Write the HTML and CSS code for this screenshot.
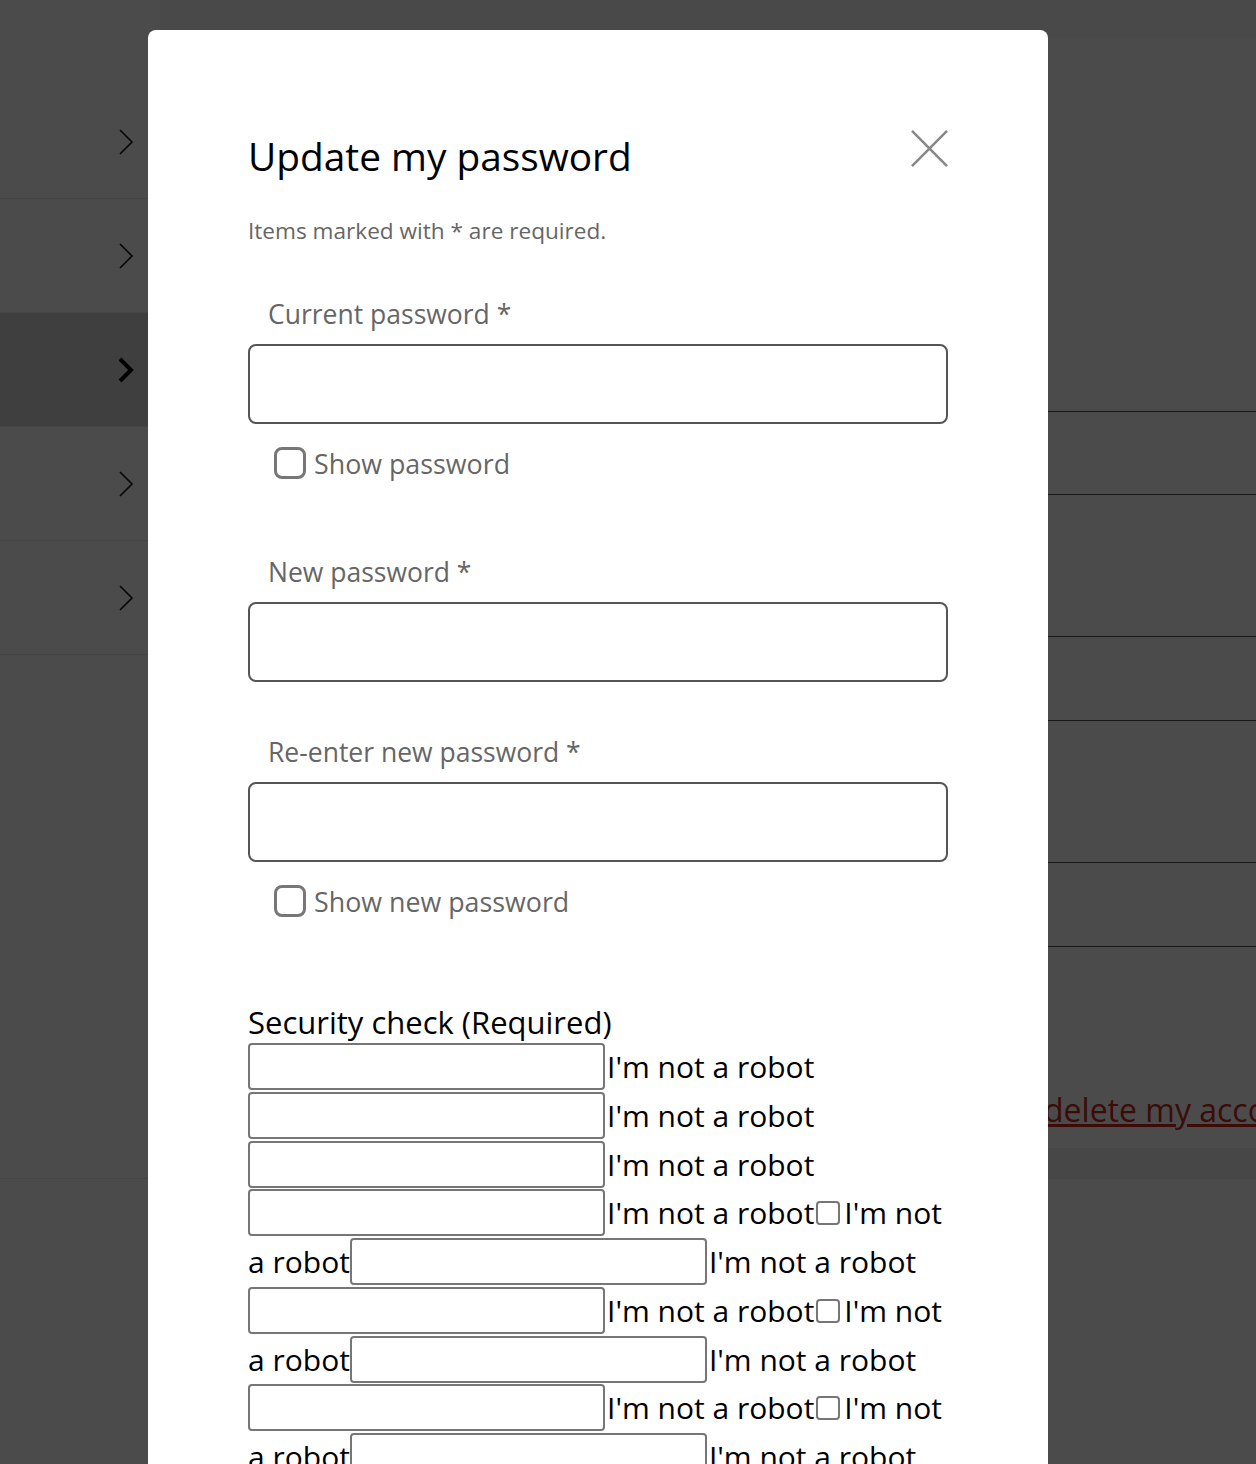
FILE: index.html
```html
<!DOCTYPE html>
<html lang="en">
<head>
<meta charset="utf-8">
<title>Update my password</title>
<link rel="stylesheet" href="styles.css">
</head>
<body>
<div class="page">
  <aside class="sidebar">
    <div class="side-top"></div>
    <div class="side-row"><svg class="chev" viewBox="0 0 16 28" width="16" height="28"><path d="M2 2 L14 14 L2 26" /></svg></div>
    <div class="side-row"><svg class="chev" viewBox="0 0 16 28" width="16" height="28"><path d="M2 2 L14 14 L2 26" /></svg></div>
    <div class="side-row active"><svg class="chev bold" viewBox="0 0 16 28" width="16" height="28"><path d="M2 3 L13 14 L2 25" /></svg></div>
    <div class="side-row"><svg class="chev" viewBox="0 0 16 28" width="16" height="28"><path d="M2 2 L14 14 L2 26" /></svg></div>
    <div class="side-row"><svg class="chev" viewBox="0 0 16 28" width="16" height="28"><path d="M2 2 L14 14 L2 26" /></svg></div>
  </aside>
  <main class="content">
    <div class="content-head"></div>
    <div class="content-intro"></div>
    <div class="detail-row r1"></div>
    <div class="detail-row r2"></div>
    <div class="detail-row r3"></div>
    <div class="detail-row r4"></div>
    <div class="detail-row r5"></div>
    <div class="delete-block"><a href="#" class="delete-link">delete my account</a></div>
    <div class="content-band"></div>
  </main>
</div>
<div class="footer-line"></div>

<div class="overlay">
  <div class="modal" role="dialog" aria-labelledby="dlg-title">
    <div class="modal-head">
      <h1 id="dlg-title" class="modal-title">Update my password</h1>
      <button class="close-btn" aria-label="Close">
        <svg viewBox="0 0 38 38" width="38" height="38"><path d="M1 1 L37 37 M37 1 L1 37" /></svg>
      </button>
    </div>
    <p class="required-note">Items marked with * are required.</p>

    <div class="field field-cur">
      <label class="field-label" for="cur">Current password *</label>
      <input class="text-input" id="cur" type="password">
    </div>
    <label class="show-row"><input type="checkbox" class="show-box"><span>Show password</span></label>

    <div class="field field-new">
      <label class="field-label" for="new1">New password *</label>
      <input class="text-input" id="new1" type="password">
    </div>
    <div class="field field-re">
      <label class="field-label" for="new2">Re-enter new password *</label>
      <input class="text-input" id="new2" type="password">
    </div>
    <label class="show-row"><input type="checkbox" class="show-box"><span>Show new password</span></label>

    <fieldset class="security">
      <legend class="security-title">Security check (Required)</legend>
      <div class="captcha"><input class="cap-input" type="text"><label class="cap-label">I'm not a robot</label><input class="cap-input" type="text"><label class="cap-label">I'm not a robot</label><input class="cap-input" type="text"><label class="cap-label">I'm not a robot</label><input class="cap-input" type="text"><label class="cap-label">I'm not a robot</label><input class="cap-box" type="checkbox"><label class="cap-label">I'm not a robot</label><input class="cap-input" type="text"><label class="cap-label">I'm not a robot</label><input class="cap-input" type="text"><label class="cap-label">I'm not a robot</label><input class="cap-box" type="checkbox"><label class="cap-label">I'm not a robot</label><input class="cap-input" type="text"><label class="cap-label">I'm not a robot</label><input class="cap-input" type="text"><label class="cap-label">I'm not a robot</label><input class="cap-box" type="checkbox"><label class="cap-label">I'm not a robot</label><input class="cap-input" type="text"><label class="cap-label">I'm not a robot</label></div>
    </fieldset>
  </div>
</div>
</body>
</html>
```

FILE: styles.css
```css
* { box-sizing: border-box; }
html, body {
  margin: 0;
  height: 1464px;
  overflow: hidden;
  background: #fff;
  font-family: "Open Sans", "Noto Sans", sans-serif;
}

/* underlying page */
.page {
  display: flex;
  height: 1178px;
}
.sidebar {
  width: 160px;
  flex: none;
}
.side-top { height: 85px; }
.side-row {
  height: 114px;
  border-bottom: 1px solid #e9e9e9;
  display: flex;
  align-items: center;
  justify-content: flex-end;
  padding-right: 26px;
}
.side-row.active { background: #d6d6d6; }
.chev { fill: none; stroke: #111; stroke-width: 1.6; }
.chev.bold { stroke: #000; stroke-width: 4; }

.content {
  flex: 1;
  display: flex;
  flex-direction: column;
}
.content-head { height: 38px; background: #f6f6f6; flex: none; }
.content-intro { height: 374px; border-bottom: 1px solid #555; flex: none; }
.detail-row { border-bottom: 1px solid #555; flex: none; }
.r1 { height: 83px; }
.r2 { height: 142px; }
.r3 { height: 84px; }
.r4 { height: 142px; }
.r5 { height: 84px; }
.delete-block {
  height: 201px;
  flex: none;
  display: flex;
  align-items: flex-end;
  padding: 0 0 18px 884px;
  font-size: 32px;
  line-height: 40px;
  white-space: nowrap;
}
.delete-link { color: #cc2a1c; }
.content-band { height: 30px; flex: none; background: #f1f1f1; }
.footer-line { height: 1px; background: #e8e8e8; }

/* overlay + modal */
.overlay {
  position: fixed;
  inset: 0;
  background: rgba(0, 0, 0, 0.706);
  overflow: hidden;
  padding-top: 30px;
}
.modal {
  width: 900px;
  margin-left: 148px;
  background: #fff;
  border-radius: 8px;
  padding: 103px 100px 200px;
  color: #000;
}
.modal-head {
  display: flex;
  justify-content: space-between;
  align-items: flex-start;
}
.modal-title {
  margin: 0;
  font-size: 38.8px;
  line-height: 46px;
  font-weight: 400;
  color: #000;
}
.close-btn {
  margin: -3px 0 0 0;
  padding: 0;
  border: 0;
  background: none;
  width: 37px;
  height: 37px;
}
.close-btn svg { display: block; width: 37px; height: 37px; fill: none; stroke: #888; stroke-width: 2.6; }

.required-note {
  margin: 38px 0 0;
  font-size: 22.6px;
  line-height: 28px;
  color: #666;
}

.field { display: flex; flex-direction: column; }
.field-cur { margin-top: 54px; }
.field-label {
  padding-left: 20px;
  font-size: 26.5px;
  line-height: 30px;
  color: #666;
  margin-bottom: 15px;
}
.text-input {
  height: 80px;
  width: 100%;
  border: 2px solid #555;
  border-radius: 8px;
  background: #fff;
}
.show-row {
  display: flex;
  align-items: center;
  gap: 8px;
  margin-top: 23px;
  padding-left: 26px;
  height: 32px;
  font-size: 26.8px;
  color: #666;
}
.show-box {
  appearance: none;
  margin: 0;
  width: 32px;
  height: 32px;
  border: 3px solid #777;
  border-radius: 8px;
  background: #fff;
}
.field-new { margin-top: 78px; }
.field-re { margin-top: 55px; }

.security {
  margin: 87px 0 0;
  padding: 0;
  border: 0;
  min-width: 0;
}
.security-title {
  padding: 0;
  font-size: 31px;
  line-height: 36px;
  color: #000;
}
.captcha {
  margin-top: 3px;
  font-size: 30px;
  line-height: 48.75px;
  color: #000;
}
.cap-input {
  width: 357px;
  height: 47px;
  vertical-align: top;
  margin: 0;
  border: 2px solid #767676;
  border-radius: 4px;
  background: #fff;
  font: inherit;
}
.cap-label { padding-left: 2px; }
.cap-box {
  appearance: none;
  vertical-align: top;
  width: 24px;
  height: 24px;
  margin: 12px 2px 0 2px;
  border: 2px solid #767676;
  border-radius: 4px;
  background: #fff;
}
```
